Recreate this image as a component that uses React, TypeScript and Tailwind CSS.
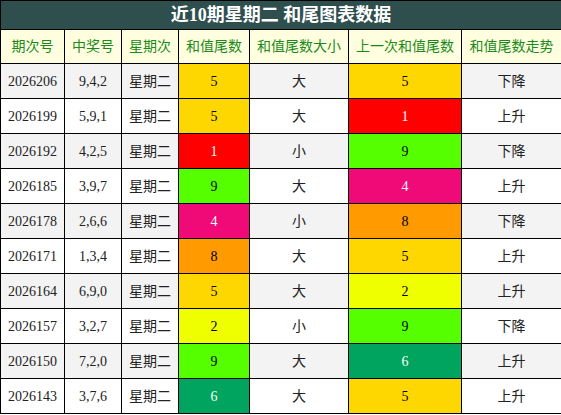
const rows = [
  ["2026206", "9,4,2", 5, "大", 5, "下降"],
  ["2026199", "5,9,1", 5, "大", 1, "上升"],
  ["2026192", "4,2,5", 1, "小", 9, "下降"],
  ["2026185", "3,9,7", 9, "大", 4, "上升"],
  ["2026178", "2,6,6", 4, "小", 8, "下降"],
  ["2026171", "1,3,4", 8, "大", 5, "上升"],
  ["2026164", "6,9,0", 5, "大", 2, "上升"],
  ["2026157", "3,2,7", 2, "小", 9, "下降"],
  ["2026150", "7,2,0", 9, "大", 6, "上升"],
  ["2026143", "3,7,6", 6, "大", 5, "上升"],
] as const;

const tailColor: Record<number, string> = {
  0: "bg-[#9acd32] text-black",
  1: "bg-[#ff0000] text-white",
  2: "bg-[#f0ff00] text-black",
  3: "bg-[#87cefa] text-black",
  4: "bg-[#f00a78] text-white",
  5: "bg-[#ffd700] text-black",
  6: "bg-[#00a45f] text-white",
  7: "bg-[#ba55d3] text-white",
  8: "bg-[#ff9a00] text-black",
  9: "bg-[#55ff00] text-black",
};

const headers = ["期次号", "中奖号", "星期次", "和值尾数", "和值尾数大小", "上一次和值尾数", "和值尾数走势"];
const widths = [64, 57, 57, 71, 99, 113, 100];

export default function App() {
  return (
    <div className="w-[561px] bg-white" style={{ fontFamily: '"Liberation Serif", "Noto Sans CJK SC", serif' }}>
      <table className="w-[561px] table-fixed border-collapse border border-black text-[14px] text-[#222]">
        <colgroup>
          {widths.map((w, i) => (
            <col key={i} style={{ width: w }} />
          ))}
        </colgroup>
        <thead>
          <tr>
            <th colSpan={7} className="h-[29px] bg-[#2f4f4f] border border-black text-white text-[18px] font-bold leading-none p-0">
              近10期星期二 和尾图表数据
            </th>
          </tr>
          <tr>
            {headers.map((h) => (
              <th key={h} className="h-[34px] bg-[#ffffe0] border border-black text-[#1a8a1a] font-normal text-[14px] p-0">
                {h}
              </th>
            ))}
          </tr>
        </thead>
        <tbody>
          {rows.map((r, i) => (
            <tr key={r[0]} className={i % 2 === 0 ? "bg-[#f3f3f3]" : "bg-white"}>
              <td className="h-[35px] border border-black text-center p-0">{r[0]}</td>
              <td className="border border-black text-center p-0">{r[1]}</td>
              <td className="border border-black text-center p-0">星期二</td>
              <td className={`border border-black text-center p-0 ${tailColor[r[2]]}`}>{r[2]}</td>
              <td className="border border-black text-center p-0">{r[3]}</td>
              <td className={`border border-black text-center p-0 ${tailColor[r[4]]}`}>{r[4]}</td>
              <td className="border border-black text-center p-0">{r[5]}</td>
            </tr>
          ))}
        </tbody>
      </table>
    </div>
  );
}
